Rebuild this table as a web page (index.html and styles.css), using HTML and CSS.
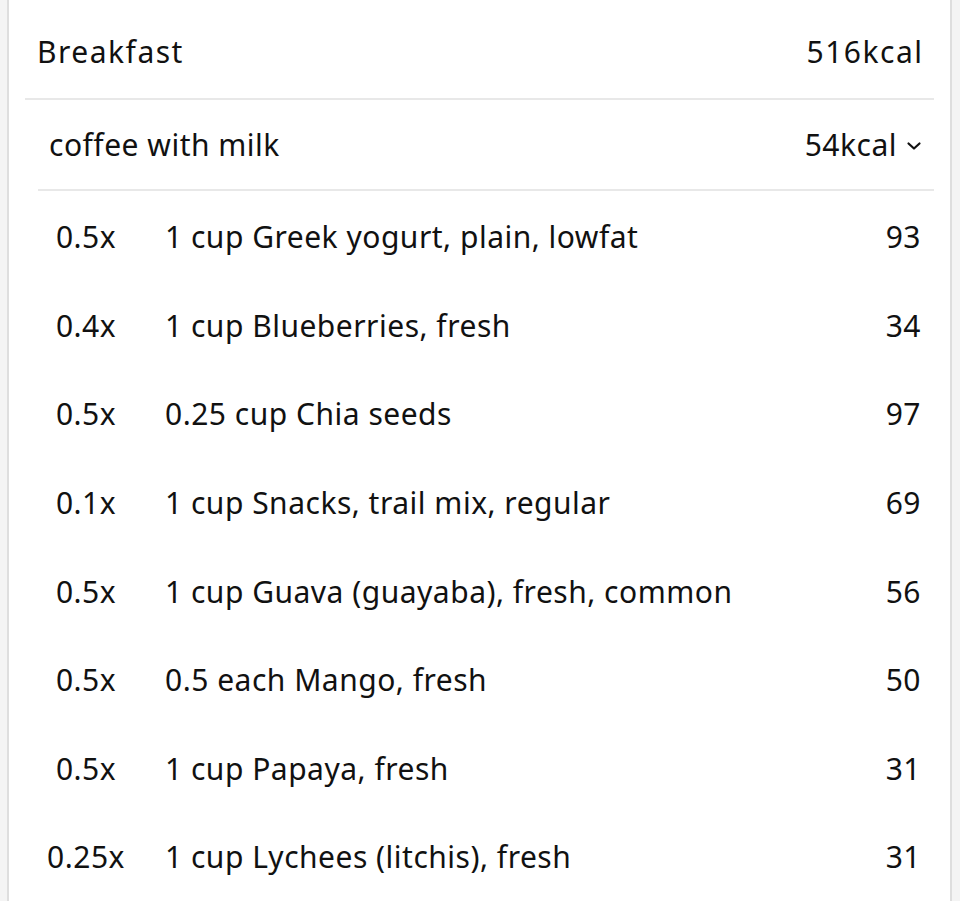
FILE: index.html
```html
<!DOCTYPE html>
<html>
<head>
<meta charset="utf-8">
<link rel="stylesheet" href="styles.css">
</head>
<body>
<div class="card">
  <div class="meal-header">
    <span class="meal-name">Breakfast</span>
    <span class="meal-kcal">516kcal</span>
  </div>
  <div class="recipe">
    <span class="recipe-name">coffee with milk</span>
    <span class="recipe-kcal">54kcal
      <svg class="chevron" width="16" height="10" viewBox="0 0 16 10"><path d="M2.5 2.5 L8 7.5 L13.5 2.5" fill="none" stroke="#111" stroke-width="2.2" stroke-linecap="round" stroke-linejoin="round"/></svg>
    </span>
  </div>
  <ul class="items">
    <li class="item"><span class="qty">0.5x</span><span class="name">1 cup Greek yogurt, plain, lowfat</span><span class="cal">93</span></li>
    <li class="item"><span class="qty">0.4x</span><span class="name">1 cup Blueberries, fresh</span><span class="cal">34</span></li>
    <li class="item"><span class="qty">0.5x</span><span class="name">0.25 cup Chia seeds</span><span class="cal">97</span></li>
    <li class="item"><span class="qty">0.1x</span><span class="name">1 cup Snacks, trail mix, regular</span><span class="cal">69</span></li>
    <li class="item"><span class="qty">0.5x</span><span class="name">1 cup Guava (guayaba), fresh, common</span><span class="cal">56</span></li>
    <li class="item"><span class="qty">0.5x</span><span class="name">0.5 each Mango, fresh</span><span class="cal">50</span></li>
    <li class="item"><span class="qty">0.5x</span><span class="name">1 cup Papaya, fresh</span><span class="cal">31</span></li>
    <li class="item"><span class="qty">0.25x</span><span class="name">1 cup Lychees (litchis), fresh</span><span class="cal">31</span></li>
  </ul>
</div>
</body>
</html>
```

FILE: styles.css
```css
html, body {
  margin: 0;
  padding: 0;
  background: #f4f4f4;
  height: 100%;
}
body {
  font-family: "Noto Sans", "DejaVu Sans", sans-serif;
  font-size: 30px;
  letter-spacing: 0.5px;
  color: #111;
}
.card {
  margin: 0 8px 0 7px;
  background: #fff;
  border-left: 2px solid #dedede;
  border-right: 2px solid #dedede;
  min-height: 100%;
  box-sizing: border-box;
  overflow: hidden;
}
.meal-header {
  display: flex;
  justify-content: space-between;
  align-items: center;
  margin: 0 16px;
  padding: 30px 12px 24px;
  line-height: 44px;
  border-bottom: 2px solid #e8e8e8;
}
.meal-name,
.meal-kcal {
  letter-spacing: 1.5px;
}
.meal-kcal {
  margin-right: -1.5px;
}
.recipe {
  display: flex;
  justify-content: space-between;
  align-items: center;
  margin: 0 16px 0 29px;
  padding: 23px 12px 22px 11px;
  line-height: 44px;
  border-bottom: 2px solid #e8e8e8;
}
.recipe-kcal {
  display: flex;
  align-items: center;
  gap: 9px;
}
.chevron {
  display: block;
  margin-top: 2px;
}
.items {
  list-style: none;
  margin: 0;
  padding: 2px 0 0;
}
.item {
  display: flex;
  align-items: center;
  padding: 22.3px 29px 22.3px 36px;
  line-height: 44px;
}
.qty {
  width: 82px;
  text-align: center;
  flex: none;
}
.name {
  flex: 1;
  margin-left: 38px;
}
.cal {
  text-align: right;
}
```
